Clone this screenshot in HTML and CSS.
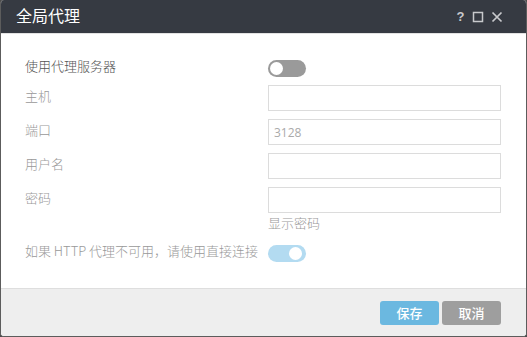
FILE: index.html
```html
<!DOCTYPE html>
<html lang="zh-CN">
<head>
    <meta charset="UTF-8">
    <meta name="viewport" content="width=device-width, initial-scale=1.0">
    <title>全局代理</title>
    <link rel="stylesheet" href="styles.css">
</head>
<body>
    <div class="dialog">
        <div class="header">
            <span class="title">全局代理</span>
            <div class="tools">
                <span class="help">?</span>
                <svg class="tool" width="12" height="12" viewBox="0 0 12 12">
                    <rect x="1.5" y="1.5" width="9" height="9" fill="none" stroke="#c8c9cc" stroke-width="1.5"/>
                </svg>
                <svg class="tool" width="12" height="12" viewBox="0 0 12 12">
                    <path d="M1.5 1.5 L10.5 10.5 M10.5 1.5 L1.5 10.5" stroke="#c8c9cc" stroke-width="1.7"/>
                </svg>
            </div>
        </div>

        <div class="content">
            <div class="row first">
                <span class="label dark">使用代理服务器</span>
                <span class="switch off"><span class="knob"></span></span>
            </div>
            <div class="row">
                <label class="label" for="host">主机</label>
                <input type="text" id="host">
            </div>
            <div class="row">
                <label class="label" for="port">端口</label>
                <input type="text" id="port" value="3128">
            </div>
            <div class="row">
                <label class="label" for="user">用户名</label>
                <input type="text" id="user">
            </div>
            <div class="row">
                <label class="label" for="pass">密码</label>
                <input type="password" id="pass">
            </div>
            <div class="show-pass">显示密码</div>
            <div class="row last">
                <span class="label">如果 HTTP 代理不可用，请使用直接连接</span>
                <span class="switch on"><span class="knob"></span></span>
            </div>
        </div>

        <div class="footer">
            <button class="btn save">保存</button>
            <button class="btn cancel">取消</button>
        </div>
    </div>
</body>
</html>
```

FILE: styles.css
```css
body {
    margin: 0;
    padding: 0;
    background-color: #4b4b4b;
    font-family: "Noto Sans CJK SC", "Liberation Sans", sans-serif;
}

.dialog {
    width: 527px;
    height: 337px;
    box-sizing: border-box;
    border: 1px solid #5c5c5c;
    border-top: none;
    border-radius: 4px;
    overflow: hidden;
    background-color: white;
    display: flex;
    flex-direction: column;
}

.header {
    height: 33px;
    flex-shrink: 0;
    background-color: #363a42;
    border-bottom: 1px solid #e2e2e2;
    display: flex;
    align-items: center;
    justify-content: space-between;
    padding: 0 23px 0 15px;
}

.title {
    color: white;
    font-size: 16px;
    line-height: 20px;
    margin-top: -3px;
}

.tools {
    display: flex;
    align-items: center;
    gap: 7px;
}

.help {
    color: #c8c9cc;
    font-family: "Liberation Sans", sans-serif;
    font-weight: bold;
    font-size: 13px;
    width: 9px;
    text-align: center;
}

.content {
    flex: 1;
    padding: 25px 24px 0 24px;
}

.row {
    display: flex;
    align-items: center;
    height: 26px;
    margin-bottom: 8px;
}

.row.first {
    height: 18px;
    margin-bottom: 8px;
}

.label {
    width: 243px;
    font-size: 13px;
    font-weight: 300;
    line-height: 18px;
    padding-bottom: 4px;
    color: #999;
}

.label.dark {
    color: #555;
}

input[type="text"],
input[type="password"] {
    width: 233px;
    height: 26px;
    box-sizing: border-box;
    border: 1px solid #dcdcdc;
    padding: 0 5px;
    font-family: "Open Sans", "Liberation Sans", sans-serif;
    font-size: 12px;
    color: #aaa;
    outline: none;
}

.show-pass {
    margin: -8px 0 0 243px;
    font-size: 13px;
    font-weight: 300;
    line-height: 20px;
    color: #999;
}

.row.last {
    height: 18px;
    margin-top: 11px;
}

.switch {
    position: relative;
    width: 38px;
    height: 17px;
    border-radius: 9px;
    display: inline-block;
}

.switch.off {
    background-color: #9a9a9a;
}

.switch.on {
    background-color: #b3dbf1;
}

.knob {
    position: absolute;
    top: 2px;
    width: 13px;
    height: 13px;
    border-radius: 50%;
    background-color: white;
}

.switch.off .knob {
    left: 2px;
}

.switch.on .knob {
    right: 4px;
}

.footer {
    height: 48px;
    flex-shrink: 0;
    background-color: #eeeeee;
    border-top: 1px solid #dedede;
    display: flex;
    justify-content: flex-end;
    align-items: flex-start;
    gap: 3px;
    padding: 12px 25px 0 0;
    box-sizing: border-box;
}

.btn {
    width: 59px;
    height: 24px;
    border: none;
    border-radius: 3px;
    color: white;
    font-family: "Noto Sans CJK SC", sans-serif;
    font-size: 13px;
    font-weight: 500;
    padding: 0 0 2px;
    cursor: pointer;
}

.btn.save {
    background-color: #6bb8e0;
}

.btn.cancel {
    background-color: #9e9e9e;
}
```
